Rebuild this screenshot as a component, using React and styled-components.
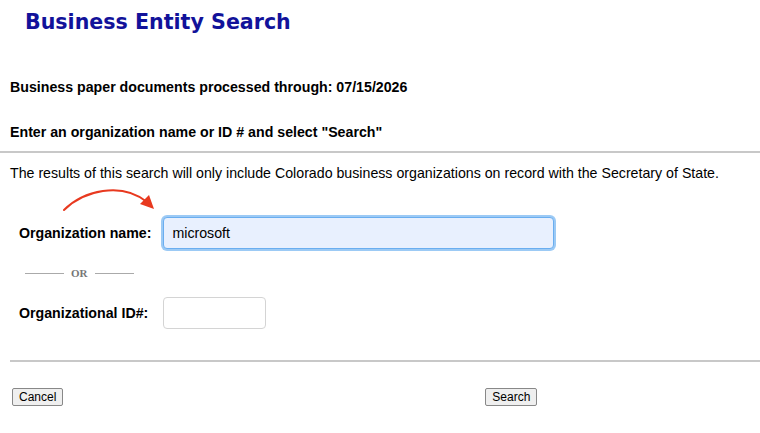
import styled, {createGlobalStyle} from "styled-components";

const GlobalStyle = createGlobalStyle`
  html, body {
    margin: 0;
    padding: 0;
    background: #ffffff;
  }
  body {
    font-family: "Liberation Sans", Arial, sans-serif;
    color: #000;
  }
`;

const App = () => {
    return (
        <>
            <GlobalStyle/>
            <Page>
                <Title>Business Entity Search</Title>
                <Notice>Business paper documents processed through: 07/15/2026</Notice>
                <Notice>Enter an organization name or ID # and select "Search"</Notice>
                <Rule/>
                <Info>
                    The results of this search will only include Colorado business organizations on record with the
                    Secretary of State.
                </Info>
                <Form>
                    <FieldRow>
                        <Arrow width="96" height="26" viewBox="0 0 96 26">
                            <path d="M1 23 C 20 4, 58 -6, 84 15" fill="none" stroke="#e8391f" strokeWidth="2"
                                  strokeLinecap="round"/>
                            <path d="M91 22 L77 17 L86 8 Z" fill="#e8391f"/>
                        </Arrow>
                        <Label>Organization name:</Label>
                        <TextInput wide focused defaultValue="microsoft"/>
                    </FieldRow>
                    <Divider>
                        <DividerLine/>
                        <DividerText>OR</DividerText>
                        <DividerLine/>
                    </Divider>
                    <FieldRow>
                        <Label>Organizational ID#:</Label>
                        <TextInput/>
                    </FieldRow>
                </Form>
                <Rule inset/>
                <Actions>
                    <Button>Cancel</Button>
                    <Button>Search</Button>
                </Actions>
            </Page>
        </>
    );
}

const Page = styled.div`
  width: 760px;
  height: 433px;
  overflow: hidden;
  box-sizing: border-box;
`;

const Title = styled.h1`
  margin: 0;
  padding: 8px 0 0 25px;
  height: 36px;
  font-family: "DejaVu Sans", Verdana, sans-serif;
  font-size: 20.6px;
  font-weight: bold;
  color: #12129a;
  line-height: 28px;
`;

const Notice = styled.p`
  margin: 0;
  padding: 0 10px;
  font-size: 14.2px;
  font-weight: bold;
  line-height: 18px;
  margin-top: 33px;
  &:first-of-type {
    margin-top: 34px;
  }
  & + & {
    margin-top: 27px;
  }
`;

const Rule = styled.hr`
  border: none;
  border-top: 2px solid #c8c8c8;
  margin: ${props => props.inset ? "31px 0 0 10px" : "10px 0 0 0"};
`;

const Info = styled.p`
  margin: 11px 0 0;
  padding: 0 10px;
  font-size: 14.2px;
  line-height: 18px;
`;

const Form = styled.div`
  display: flex;
  flex-direction: column;
  padding: 35px 0 0 19px;
`;

const FieldRow = styled.div`
  position: relative;
  display: flex;
  align-items: center;
  gap: 12px;
`;

const Arrow = styled.svg`
  position: absolute;
  left: 44px;
  top: -30px;
`;

const Label = styled.span`
  flex: 0 0 132px;
  white-space: nowrap;
  font-size: 14.2px;
  font-weight: bold;
`;

const TextInput = styled.input`
  box-sizing: border-box;
  width: ${props => props.wide ? "391px" : "103px"};
  height: 32px;
  padding: 0 8px;
  font-family: "Liberation Sans", Arial, sans-serif;
  font-size: 14.2px;
  color: #000;
  border-radius: 4px;
  background: ${props => props.focused ? "#e8f0fe" : "#fff"};
  border: 1px solid ${props => props.focused ? "#6aaef0" : "#d4d4d4"};
  box-shadow: ${props => props.focused ? "0 0 0 2px #9ccaf5" : "none"};
  outline: none;
`;

const Divider = styled.div`
  display: flex;
  align-items: center;
  gap: 7px;
  margin: 16px 0 16px 6px;
  height: 16px;
`;

const DividerLine = styled.span`
  width: 39px;
  border-top: 1px solid #aaa;
`;

const DividerText = styled.span`
  font-family: "Liberation Serif", "Times New Roman", serif;
  font-size: 11px;
  font-weight: bold;
  color: #777;
`;

const Actions = styled.div`
  display: flex;
  gap: 422px;
  padding: 26px 0 0 12px;
`;

const Button = styled.button`
  font-family: "Liberation Sans", Arial, sans-serif;
  font-size: 12px;
  height: 18px;
  padding: 0 6px;
  line-height: 16px;
  background: #efefef;
  border: 1px solid #888;
  border-radius: 2px;
  color: #000;
`;

export default App;
